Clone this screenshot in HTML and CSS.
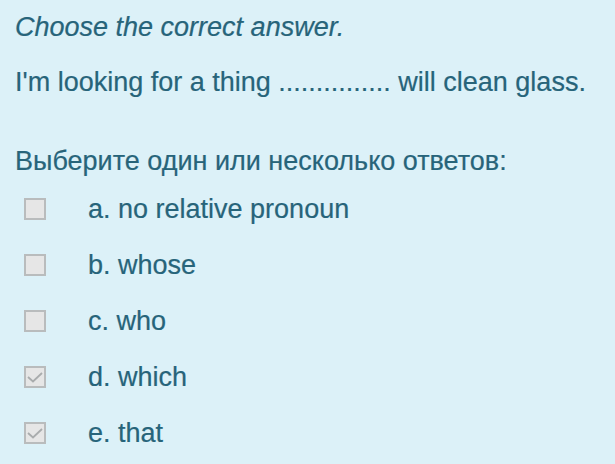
FILE: index.html
```html
<!DOCTYPE html>
<html lang="ru">

<head>
    <meta charset="UTF-8">
    <title>Question</title>
    <link rel="stylesheet" href="styles.css">
</head>

<body>
    <div class="question">
        <p class="prompt">Choose the correct answer.</p>
        <p class="text">I'm looking for a thing ............... will clean glass.</p>
        <p class="hint">Выберите один или несколько ответов:</p>
        <div class="answers">
            <label class="answer"><span class="box"></span>a. no relative pronoun</label>
            <label class="answer"><span class="box"></span>b. whose</label>
            <label class="answer"><span class="box"></span>c. who</label>
            <label class="answer"><span class="box checked"><svg viewBox="0 0 18 18"><path d="M2 9 L7 13.5 L16 5" /></svg></span>d. which</label>
            <label class="answer"><span class="box checked"><svg viewBox="0 0 18 18"><path d="M2 9 L7 13.5 L16 5" /></svg></span>e. that</label>
        </div>
    </div>
</body>

</html>
```

FILE: styles.css
```css
body {
    margin: 0;
    background-color: #dcf1f8;
    font-family: "Liberation Sans", Arial, sans-serif;
    color: #27647a;
}

.question {
    padding: 12px 15px;
    -webkit-text-stroke: 0.2px #27647a;
}

.question p {
    margin: 0;
    font-size: 27px;
    line-height: 30px;
}

.prompt {
    font-style: italic;
}

.text {
    margin-top: 25px !important;
}

.hint {
    margin-top: 49px !important;
}

.answers {
    display: flex;
    flex-direction: column;
    margin-top: 18px;
    gap: 26px;
}

.answer {
    display: flex;
    align-items: center;
    font-size: 27px;
    line-height: 30px;
}

.box {
    width: 18px;
    height: 18px;
    border: 2px solid #b9bcbd;
    background: #e6e6e6;
    margin-left: 9px;
    margin-right: 42px;
    display: flex;
}

.box svg {
    width: 18px;
    height: 18px;
}

.box path {
    fill: none;
    stroke: #a9acad;
    stroke-width: 1.8;
}
```
